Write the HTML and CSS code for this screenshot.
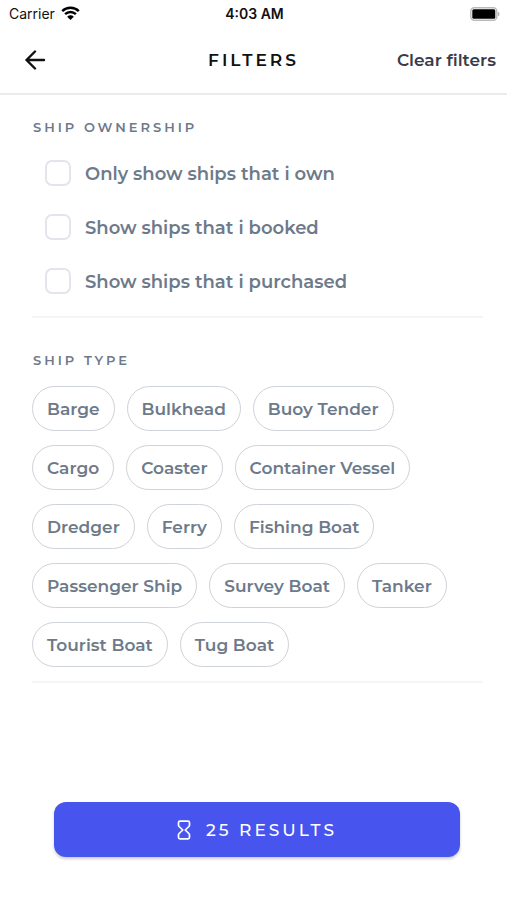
FILE: index.html
```html
<!DOCTYPE html>
<html lang="en">
<head>
<meta charset="utf-8">
<meta name="viewport" content="width=device-width, initial-scale=1">
<title>Filters</title>
<link rel="stylesheet" href="styles.css">
</head>
<body>
<div class="status">
  <div class="carrier">
    <span>Carrier</span>
    <svg width="19" height="15" viewBox="0 0 19 15" aria-hidden="true">
      <path d="M1.2 5.2a12 12 0 0 1 16.6 0M4.1 8.2a7.8 7.8 0 0 1 10.8 0" fill="none" stroke="#000" stroke-width="2.5"/>
      <path d="M9.5 14 6.2 10.7a4.7 4.7 0 0 1 6.6 0z"/>
    </svg>
  </div>
  <div class="time">4:03 AM</div>
  <div class="battery">
    <svg width="30" height="14" viewBox="0 0 30 14" aria-hidden="true">
      <rect x="0.8" y="0.8" width="26" height="12.4" rx="3.5" fill="#fff" stroke="#b9b9b9" stroke-width="1.4"/>
      <rect x="2.3" y="2.3" width="23" height="9.4" rx="1.5"/>
      <path d="M28 4.7v4.6a2.5 2.5 0 0 0 0-4.6z" fill="#b0b0b0"/>
    </svg>
  </div>
</div>
<header class="header">
  <div class="side">
    <button class="back" type="button" aria-label="Back">
      <svg width="22" height="20" viewBox="0 0 22 20" aria-hidden="true">
        <path d="M19 10H1.500M10 1.500 1.500 10l8.500 8.500" fill="none" stroke="#111" stroke-width="2.4" stroke-linecap="round" stroke-linejoin="round"/>
      </svg>
    </button>
  </div>
  <h1>FILTERS</h1>
  <div class="side end"><button class="clear" type="button">Clear filters</button></div>
</header>
<main class="main">
  <section class="section">
    <h2>SHIP OWNERSHIP</h2>
    <div class="checks">
      <label class="check"><input type="checkbox"><span>Only show ships that i own</span></label>
      <label class="check"><input type="checkbox"><span>Show ships that i booked</span></label>
      <label class="check"><input type="checkbox"><span>Show ships that i purchased</span></label>
    </div>
  </section>
  <section class="section types">
    <h2>SHIP TYPE</h2>
    <div class="chips">
      <button class="chip" type="button">Barge</button>
      <button class="chip" type="button">Bulkhead</button>
      <button class="chip" type="button">Buoy Tender</button>
      <button class="chip" type="button">Cargo</button>
      <button class="chip" type="button">Coaster</button>
      <button class="chip" type="button">Container Vessel</button>
      <button class="chip" type="button">Dredger</button>
      <button class="chip" type="button">Ferry</button>
      <button class="chip" type="button">Fishing Boat</button>
      <button class="chip" type="button">Passenger Ship</button>
      <button class="chip" type="button">Survey Boat</button>
      <button class="chip" type="button">Tanker</button>
      <button class="chip" type="button">Tourist Boat</button>
      <button class="chip" type="button">Tug Boat</button>
    </div>
  </section>
</main>
<footer class="footer">
  <button class="results" type="button">
    <svg width="14" height="20" viewBox="0 0 14 20" aria-hidden="true">
      <path d="M3 1.200h8q1.500 0 1.500 1.500v2.300q0 .9-.6 1.500L8.200 10l3.700 3.500q.6.600.6 1.500v2.300q0 1.500-1.500 1.500H3q-1.500 0-1.500-1.500V15q0-.9.6-1.500L5.800 10 2.100 6.500q-.6-.6-.6-1.500V2.700Q1.500 1.200 3 1.200z" fill="none" stroke="#fff" stroke-width="1.700" stroke-linejoin="round"/>
    </svg>
    <span>25 RESULTS</span>
  </button>
</footer>
</body>
</html>
```

FILE: styles.css
```css
* {
  box-sizing: border-box;
}

body {
  margin: 0;
  min-height: 100vh;
  display: flex;
  flex-direction: column;
  background: #fff;
  color: #6e7a8a;
  font-family: Montserrat, Inter, sans-serif;
}

button {
  font: inherit;
  color: inherit;
  margin: 0;
  padding: 0;
  border: 0;
  background: none;
  cursor: pointer;
}

svg {
  display: block;
  flex: none;
}

.status {
  display: grid;
  grid-template-columns: 1fr auto 1fr;
  align-items: center;
  height: 27px;
  padding: 0 7px 0 9px;
  color: #111;
  font-family: Inter, sans-serif;
  font-size: 14px;
}

.carrier {
  display: flex;
  align-items: center;
  gap: 6px;
}

.time {
  font-weight: 600;
}

.battery {
  justify-self: end;
}

.header {
  display: grid;
  grid-template-columns: 1fr auto 1fr;
  align-items: center;
  height: 68px;
  padding: 0 11px;
  border-bottom: 2px solid #ebebed;
}

.side {
  display: flex;
}

.back {
  padding: 0 14px;
}

.end {
  justify-content: flex-end;
}

h1 {
  margin: 0;
  color: #111;
  font-size: 17px;
  font-weight: 600;
  letter-spacing: 3px;
}

.clear {
  color: #3b3b48;
  font-size: 17px;
  font-weight: 600;
}

.main {
  flex: 1;
  padding: 0 24px 0 32px;
}

.section {
  padding: 22px 0;
  border-bottom: 2px solid #f4f5f7;
}

.types {
  padding: 32px 0 14px;
}

h2 {
  margin: 0;
  padding-left: 1px;
  font-size: 13px;
  line-height: 20px;
  font-weight: 600;
  letter-spacing: 3px;
}

.checks {
  display: grid;
  gap: 28px;
  padding: 23px 0 0 13px;
}

.check {
  display: flex;
  align-items: center;
  gap: 14px;
  font-size: 18px;
  line-height: 24px;
  font-weight: 600;
}

.check span {
  padding-top: 2px;
}

.check input {
  appearance: none;
  width: 26px;
  height: 26px;
  margin: 0;
  border: 2px solid #e3e5ec;
  border-radius: 7px;
  background: #fff;
}

.check input:checked {
  background: #4754ee;
}

.chips {
  display: flex;
  flex-wrap: wrap;
  gap: 14px 12px;
  padding-top: 16px;
}

.chip {
  height: 45px;
  padding: 0 14px;
  border: 1px solid #ced2d9;
  border-radius: 23px;
  font-size: 17px;
  font-weight: 600;
}

.footer {
  padding: 0 47px 43px 54px;
}

.results {
  display: flex;
  align-items: center;
  justify-content: center;
  gap: 15px;
  width: 100%;
  height: 55px;
  border-radius: 12px;
  background: #4754ee;
  box-shadow: 0 2px 3px #0003;
  color: #fff;
  font-size: 17px;
  line-height: 20px;
  font-weight: 500;
  letter-spacing: 3px;
}
```
